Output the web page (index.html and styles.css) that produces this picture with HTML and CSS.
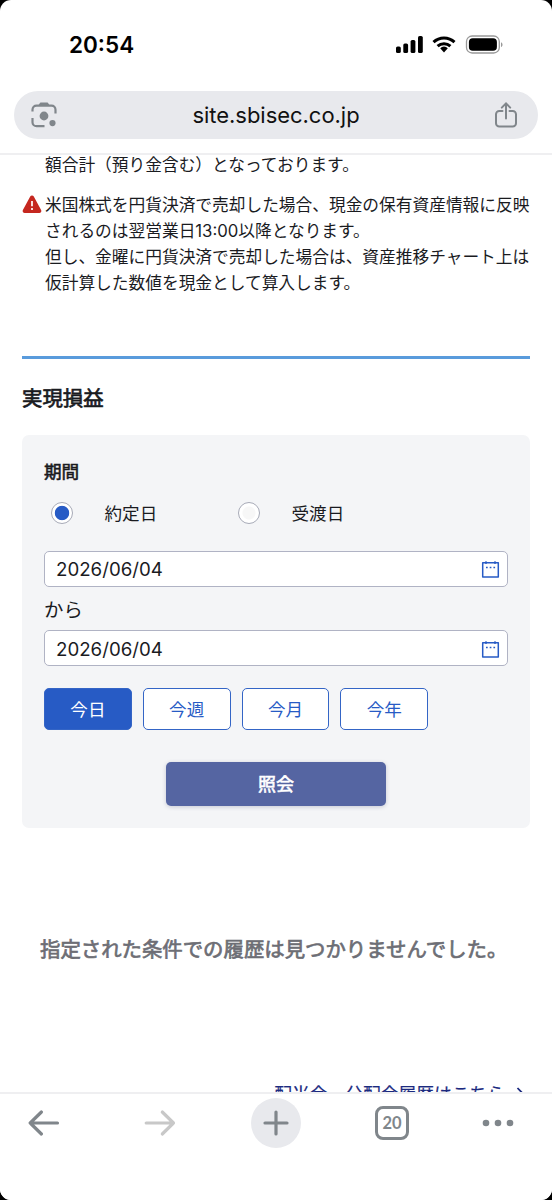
FILE: index.html
```html
<!DOCTYPE html>
<html lang="ja">
<head>
<meta charset="utf-8">
<title>実現損益</title>
<link rel="stylesheet" href="styles.css">
</head>
<body>
<div class="phone">
  <header class="top">
    <div class="status">
      <span class="clock">20:54</span>
      <svg class="signals" width="110" height="20" viewBox="0 0 110 20">
        <g fill="#000">
          <rect x="1" y="11.5" width="4.8" height="6.5" rx="1.6"/>
          <rect x="8.3" y="8.5" width="4.8" height="9.5" rx="1.6"/>
          <rect x="15.6" y="5" width="4.8" height="13" rx="1.6"/>
          <rect x="23" y="1" width="4.8" height="17" rx="1.6"/>
          <path d="M45.2 13.2a5.2 5.2 0 0 1 7.6 0L49 17.6z"/>
          <rect x="73.9" y="3.2" width="28" height="12.6" rx="3.8"/>
        </g>
        <g fill="none" stroke="#000" stroke-width="3">
          <path d="M38.5 7.2a15.2 15.2 0 0 1 21 0"/>
          <path d="M42.6 11.2a9.3 9.3 0 0 1 12.8 0"/>
        </g>
        <rect x="71.5" y="1" width="32.8" height="17" rx="5.6" fill="none" stroke="#999" stroke-width="1.3"/>
        <path d="M106 7.2c2 .8 2 4 0 4.8z" fill="#999"/>
      </svg>
    </div>
    <div class="address">
      <svg width="28" height="28" viewBox="0 0 28 28">
        <g fill="none" stroke="#80868b" stroke-width="2.2">
          <path d="M2.5 10.5V8.7a4 4 0 0 1 4-4h15a4 4 0 0 1 4 4v3.8M2.5 17v4.2a4 4 0 0 0 4 4H14.5"/>
        </g>
        <path d="M9.5 4l1.2-1.8h6.6L18.5 4z" fill="#80868b" stroke="#80868b" stroke-width="1.4" stroke-linejoin="round"/>
        <circle cx="14" cy="15" r="4.4" fill="#80868b"/>
        <circle cx="22.5" cy="22.1" r="3.1" fill="#80868b"/>
      </svg>
      <span class="host">site.sbisec.co.jp</span>
      <svg width="28" height="28" viewBox="0 0 28 28" fill="none" stroke="#80868b" stroke-width="2" stroke-linecap="round">
        <path d="M10.5 9.9H7.3a3.3 3.3 0 0 0-3.3 3.3v9a3.3 3.3 0 0 0 3.3 3.3h13.4a3.3 3.3 0 0 0 3.3-3.3v-9a3.3 3.3 0 0 0-3.3-3.3h-3.2"/>
        <path d="M14 17.5V2.6M9.8 6.6L14 2.4l4.2 4.2"/>
      </svg>
    </div>
  </header>

  <main class="content">
    <p class="note">額合計（預り金含む）となっております。</p>
    <div class="note warning">
      <svg class="alert" width="20" height="19" viewBox="0 0 20 19">
        <path d="M8.2 1.6a2 2 0 0 1 3.6 0l7.3 13.3a2 2 0 0 1-1.8 3H2.7a2 2 0 0 1-1.8-3z" fill="#c5271f"/>
        <path d="M10 6v5.2M10 13v1.9" stroke="#fff" stroke-width="1.7"/>
      </svg>
      米国株式を円貨決済で売却した場合、現金の保有資産情報に反映<br>されるのは翌営業日13:00以降となります。<br>但し、金曜に円貨決済で売却した場合は、資産推移チャート上は<br>仮計算した数値を現金として算入します。
    </div>

    <section class="realized">
      <h2>実現損益</h2>
      <form class="panel">
        <h3>期間</h3>
        <div class="radios">
          <span class="radio on"></span><span class="radio-label">約定日</span>
          <span class="radio"></span><span class="radio-label">受渡日</span>
        </div>
        <div class="date">
          <span>2026/06/04</span>
          <svg width="19" height="19" viewBox="0 0 19 19"><path d="M1.7 2.7h15.6v14.3H1.7z" fill="none" stroke="#275bc5" stroke-width="1.5" stroke-linejoin="round"/><path d="M5 1.3v2.7M14 1.3v2.7" stroke="#275bc5" stroke-width="1.4"/><path d="M5 7.5h1.7M8.7 7.5h1.7M12.4 7.5h1.7" stroke="#275bc5" stroke-width="1.7"/></svg>
        </div>
        <div class="from">から</div>
        <div class="date">
          <span>2026/06/04</span>
          <svg width="19" height="19" viewBox="0 0 19 19"><path d="M1.7 2.7h15.6v14.3H1.7z" fill="none" stroke="#275bc5" stroke-width="1.5" stroke-linejoin="round"/><path d="M5 1.3v2.7M14 1.3v2.7" stroke="#275bc5" stroke-width="1.4"/><path d="M5 7.5h1.7M8.7 7.5h1.7M12.4 7.5h1.7" stroke="#275bc5" stroke-width="1.7"/></svg>
        </div>
        <div class="ranges">
          <span class="range active">今日</span><span class="range">今週</span><span class="range">今月</span><span class="range">今年</span>
        </div>
        <div class="submit">照会</div>
      </form>
    </section>

    <p class="empty">指定された条件での履歴は見つかりませんでした。</p>
    <div class="history">
      <span>配当金・分配金履歴はこちら</span>
      <svg width="8" height="14" viewBox="0 0 8 14"><path d="M1.5 2l4.8 5-4.8 5" fill="none" stroke="#1b2a7f" stroke-width="1.8"/></svg>
    </div>
  </main>

  <nav class="toolbar">
    <svg width="32" height="28" viewBox="0 0 32 28"><path d="M29.5 14H2.2M13.4 3L2.2 14l11.2 11" fill="none" stroke="#80868b" stroke-width="3.2" stroke-linecap="round" stroke-linejoin="round"/></svg>
    <svg width="32" height="28" viewBox="0 0 32 28"><path d="M2.2 14h27.3M18.3 3l11.2 11-11.2 11" fill="none" stroke="#c8c8c8" stroke-width="3.2" stroke-linecap="round" stroke-linejoin="round"/></svg>
    <span class="new-tab"><svg width="28" height="28" viewBox="0 0 28 28"><path d="M14 3v22M3 14h22" stroke="#80868b" stroke-width="3.2" stroke-linecap="round"/></svg></span>
    <span class="tabs">20</span>
    <svg class="more" width="32" height="8" viewBox="0 0 32 8" fill="#80868b"><circle cx="4" cy="4" r="3.3"/><circle cx="16" cy="4" r="3.3"/><circle cx="28" cy="4" r="3.3"/></svg>
  </nav>
</div>
</body>
</html>
```
FILE: styles.css
```css
* { box-sizing: border-box; }
body {
  margin: 0;
  background: #000;
  color: #1a1b1f;
  font-family: Inter, "Noto Sans CJK JP", sans-serif;
}
h2, h3, p { margin: 0; }
svg { display: block; flex: none; }
.phone {
  display: flex;
  flex-direction: column;
  width: 552px;
  height: 1200px;
  border-radius: 11px;
  overflow: hidden;
  background: #fff;
}

/* Browser header */
.top {
  height: 155px;
  flex: none;
  border-bottom: 2px solid #efeff1;
}
.status {
  display: flex;
  justify-content: space-between;
  align-items: center;
  height: 91px;
  padding: 0 47px 2px 69px;
}
.clock {
  font-size: 22.5px;
  font-weight: 600;
  color: #000;
}
.signals { margin-top: 1px; }
.address {
  display: flex;
  align-items: center;
  justify-content: space-between;
  height: 48px;
  margin: 0 14px;
  padding: 0 18px 0 16px;
  border-radius: 24px;
  background: #e8e9ed;
}
.host {
  padding-left: 2px;
  font-size: 22px;
  letter-spacing: -.03px;
  color: #111;
}

/* Page */
.content {
  flex: none;
  height: 937px;
  padding: 0 22px;
  overflow: hidden;
}
.note {
  position: relative;
  padding-left: 23px;
  font-size: 16.72px;
  line-height: 26.2px;
  white-space: nowrap;
  margin-top: -3px;
}
.warning { margin-top: 13.5px; }
.alert {
  position: absolute;
  left: 0;
  top: 3px;
}
.realized {
  margin-top: 59px;
  border-top: 3px solid #599bdc;
}
h2 {
  height: 76px;
  padding-top: 25px;
  font-size: 20.4px;
  font-weight: 400;
  line-height: 30px;
  -webkit-text-stroke: .7px currentColor;
}
.panel {
  height: 393px;
  padding: 22px;
  border-radius: 7px;
  background: #f4f5f7;
}
h3 {
  padding-top: 1px;
  font-size: 17.6px;
  font-weight: 400;
  line-height: 27px;
  -webkit-text-stroke: .6px currentColor;
}
.radios {
  display: grid;
  grid-template-columns: 60.5px 126px 61px 100px;
  align-items: center;
  height: 44px;
  margin: 6px 0 16px;
  font-size: 17.6px;
}
.radio-label { padding-bottom: 1px; }
.radio {
  width: 22px;
  height: 22px;
  margin-left: 7px;
  border: 1.3px solid #a8abb8;
  border-radius: 50%;
  background: radial-gradient(circle, #f7f7f7 6px, #fff 7px);
}
.on { background: radial-gradient(circle, #275bc5 6.8px, #fff 7.6px); }
.date {
  display: flex;
  align-items: center;
  justify-content: space-between;
  height: 36px;
  padding: 2px 7px 0 11px;
  border: 1.5px solid #b0b3c4;
  border-radius: 5px;
  background: #fff;
  font-size: 18.7px;
}
.from {
  height: 43px;
  padding-top: 2px;
  font-size: 19.4px;
  line-height: 43px;
}
.from + .date { padding-top: 3px; }
.ranges {
  display: flex;
  gap: 11px;
  margin-top: 22px;
}
.range {
  width: 87.8px;
  height: 42px;
  padding-top: 1px;
  border: 1.5px solid #3465c6;
  border-radius: 5px;
  background: #fff;
  color: #275bc5;
  font-size: 17.6px;
  line-height: 39px;
  text-align: center;
}
.active { background: #275bc5; color: #fff; }
.submit {
  width: 220px;
  height: 44px;
  margin: 32px auto 0;
  border-radius: 5px;
  background: #5565a2;
  box-shadow: 0 1px 4px rgba(40, 50, 90, .22);
  color: #fff;
  font-size: 18px;
  line-height: 45px;
  text-align: center;
  -webkit-text-stroke: .6px currentColor;
}
.empty {
  margin: 107px 0 0 18px;
  color: #6d6e75;
  font-size: 20.4px;
  line-height: 30px;
  white-space: nowrap;
  -webkit-text-stroke: .7px currentColor;
}
.history {
  display: flex;
  align-items: center;
  justify-content: flex-end;
  gap: 11px;
  height: 26px;
  margin-top: 115px;
  padding-right: 6px;
  color: #1b2a7f;
  font-size: 17.75px;
  -webkit-text-stroke: .2px currentColor;
}

/* Browser toolbar */
.toolbar {
  flex: 1;
  display: grid;
  grid-template-columns: 116px 116px 116px 116px 96px;
  justify-content: center;
  justify-items: center;
  align-items: center;
  padding: 3px 20px 52px 0;
  border-top: 2px solid #efeff1;
  background: #fff;
}
.new-tab {
  display: grid;
  place-items: center;
  width: 50px;
  height: 50px;
  border-radius: 50%;
  background: #e8e9ed;
}
.tabs {
  width: 34px;
  height: 34px;
  border: 3px solid #80868b;
  border-radius: 8px;
  color: #80868b;
  font: 700 16.5px/29px Lato, sans-serif;
  text-align: center;
}
```
